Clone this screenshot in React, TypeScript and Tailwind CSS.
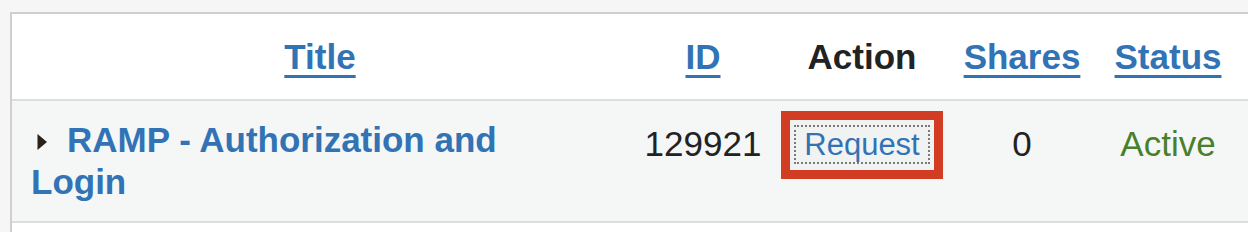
const font = { fontFamily: '"Liberation Sans", Arial, sans-serif' };

const SortLink = ({ label }: { label: string }) => (
  <a
    href="#"
    className="text-[#3173b4] font-bold underline decoration-[3px] underline-offset-[6px]"
  >
    {label}
  </a>
);

const App = () => {
  return (
    <div
      className="h-[232px] overflow-hidden bg-[#f6f6f6] pt-[12px] pl-[10px]"
      style={font}
    >
      <div className="w-[1400px] h-[300px] bg-white border-l-2 border-t-2 border-[#cfcfcf] text-[35px] leading-[42px]">
        {/* Header */}
        <div className="grid grid-cols-[616px_150px_168px_152px_140px_1fr] border-b-2 border-[#dddddd] text-center">
          <div className="pt-[22px] pb-[21px]">
            <SortLink label="Title" />
          </div>
          <div className="pt-[22px] pb-[21px]">
            <SortLink label="ID" />
          </div>
          <div className="pt-[22px] pb-[21px] font-bold text-[#222222]">Action</div>
          <div className="pt-[22px] pb-[21px]">
            <SortLink label="Shares" />
          </div>
          <div className="pt-[22px] pb-[21px]">
            <SortLink label="Status" />
          </div>
          <div />
        </div>

        {/* Row */}
        <div className="grid grid-cols-[616px_150px_168px_152px_140px_1fr] border-b-2 border-[#dddddd] bg-[#f5f7f7] text-center">
          <div className="pt-[18px] pb-[18px] pl-[19px] pr-[40px] text-left">
            <svg
              width="12"
              height="18"
              viewBox="0 0 12 18"
              className="inline-block ml-[5px] mr-[19px] align-[1px]"
            >
              <path d="M1.5 1 L11 9 L1.5 17 Z" fill="#2a2118" />
            </svg>
            <a href="#" className="font-bold text-[#3173b4]">
              RAMP - Authorization and Login
            </a>
          </div>
          <div className="pt-[22px] text-[#222222]">129921</div>
          <div className="pt-[10px]">
            <span className="inline-block border-[9px] border-[#d23c23] bg-[#f1f3f3] px-[4px] pt-[5px] pb-[6px]">
              <span className="block border-2 border-dotted border-[#7a7a7a] px-[8px] text-[31px] leading-[35px] text-[#3173b4]">
                Request
              </span>
            </span>
          </div>
          <div className="pt-[22px] text-[#222222]">0</div>
          <div className="pt-[22px] text-[#4a7f2b]">Active</div>
          <div />
        </div>
      </div>
    </div>
  );
};

export default App;
